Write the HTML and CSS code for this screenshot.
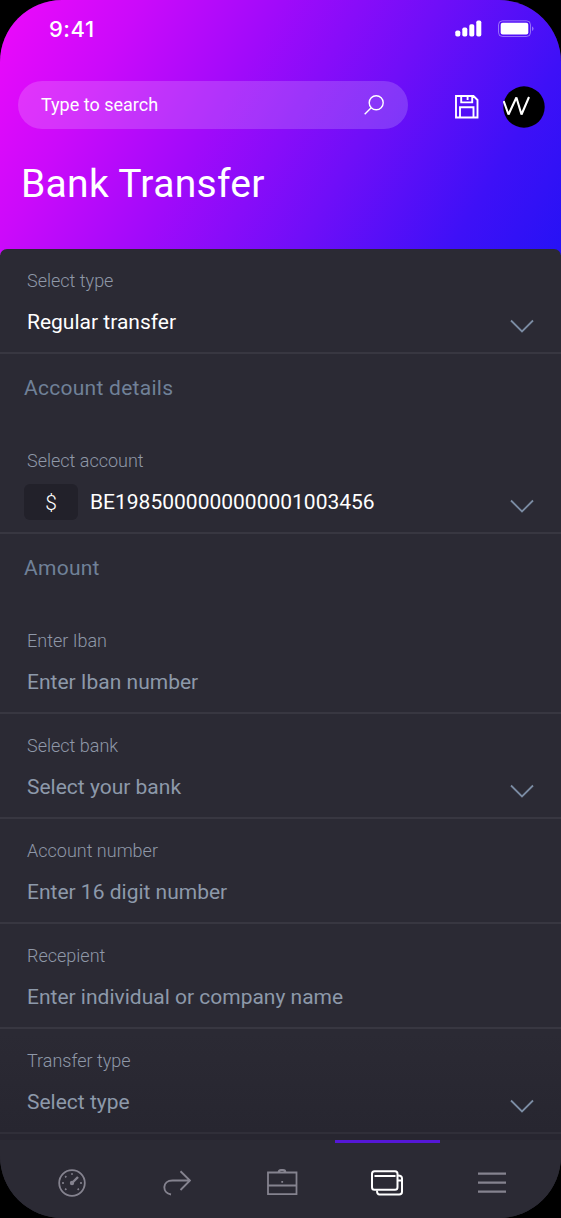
FILE: index.html
```html
<!DOCTYPE html>
<html lang="en">
<head>
<meta charset="utf-8">
<title>Bank Transfer</title>
<link rel="stylesheet" href="styles.css">
</head>
<body>
<main class="phone">
  <header class="header">
    <div class="status">
      <span class="time">9:41</span>
      <svg class="status-icons" width="80" height="18" viewBox="0 0 80 18" fill="#fff">
        <rect x="0.300" y="10.500" width="5" height="6" rx="1.700"/><rect x="7.300" y="7.500" width="5" height="9" rx="1.700"/><rect x="14.300" y="4.200" width="5" height="12.300" rx="1.700"/><rect x="21.300" y="0.500" width="5" height="16" rx="1.700"/>
        <rect x="43.500" y="0.800" width="32" height="15.700" rx="4" fill="none" stroke="#fff" stroke-opacity=".4"/>
        <rect x="45.700" y="2.800" width="27.600" height="11.700" rx="2"/>
        <path d="M77.200 6.300q2.600 2.300 0 4.900z" opacity=".5"/>
      </svg>
    </div>
    <div class="toolbar">
      <div class="search"><span class="placeholder">Type to search</span>
        <svg width="20" height="20" viewBox="0 0 20 20" fill="none" stroke="#fff" stroke-width="1.400"><circle cx="12.200" cy="7.800" r="7"/><path d="M7.200 12.800.7 19.300"/></svg>
      </div>
      <svg class="save" width="24" height="24" viewBox="0 0 24 24" fill="none" stroke="#fff" stroke-width="1.900"><path d="M1 1h17.500l4 4v17.500H1zM6.200 1v6.400h11V1M12.600 2v3M5 22V12.300h13.500V22"/></svg>
      <svg class="avatar" width="42" height="42" viewBox="0 0 42 42"><circle cx="21" cy="21" r="20.700"/><path d="M.7 15 5.500 28.500 13.400 11.500 18.500 28.500 26 11" fill="none" stroke="#fff" stroke-width="2.100" stroke-linejoin="bevel"/></svg>
    </div>
    <h1 class="title">Bank Transfer</h1>
  </header>
  <section class="sheet">
    <div class="field"><label class="label">Select type</label><div class="value filled">Regular transfer</div><svg class="chevron" width="24" height="14" viewBox="0 0 24 14"><path d="M1 1.500 12 12.500 23 1.500"/></svg></div>
    <h2 class="section">Account details</h2>
    <div class="field"><label class="label">Select account</label><div class="value filled account"><span class="currency">$</span><span class="number">BE1985000000000001003456</span></div><svg class="chevron" width="24" height="14" viewBox="0 0 24 14"><path d="M1 1.500 12 12.500 23 1.500"/></svg></div>
    <h2 class="section">Amount</h2>
    <div class="field"><label class="label">Enter Iban</label><div class="value">Enter Iban number</div></div>
    <div class="field"><label class="label">Select bank</label><div class="value">Select your bank</div><svg class="chevron" width="24" height="14" viewBox="0 0 24 14"><path d="M1 1.500 12 12.500 23 1.500"/></svg></div>
    <div class="field"><label class="label">Account number</label><div class="value">Enter 16 digit number</div></div>
    <div class="field"><label class="label">Recepient</label><div class="value">Enter individual or company name</div></div>
    <div class="field last"><label class="label">Transfer type</label><div class="value">Select type</div><svg class="chevron" width="24" height="14" viewBox="0 0 24 14"><path d="M1 1.500 12 12.500 23 1.500"/></svg></div>
  </section>
  <nav class="nav">
    <a class="tab"><svg width="28" height="28" viewBox="0 0 28 28" fill="none" stroke="#85838f" stroke-width="1.800"><circle cx="14" cy="14" r="12.800"/><path d="m14 14 6-6" stroke-width="2.400"/><circle cx="14" cy="14" r="2.200" fill="#85838f" stroke="none"/><path d="M14 4.200v1.600M4.200 14h1.600M22.200 14h1.600M7.200 7.200l1.100 1.100M7.200 20.800l1.100-1.100M20.800 20.800l-1.100-1.100" stroke-width="1.800"/></svg></a>
    <a class="tab"><svg width="28" height="26" viewBox="0 0 28 26" fill="none" stroke="#85838f" stroke-width="1.900"><path d="M26.500 10.500H9.500C-1 10.500-1.200 22.800 8 24.500M17.500 1.200 27 10.500l-9.500 9.500"/></svg></a>
    <a class="tab"><svg width="32" height="28" viewBox="0 0 32 28" fill="none" stroke="#85838f" stroke-width="1.800"><path d="M2 3.500h28.500v21.700H2zM2 16.500h28.500M12.500 3.500q0-2.500 2.500-2.500h2q2.500 0 2.500 2.500M15.300 12.800h1.800"/></svg></a>
    <a class="tab active"><svg width="34" height="26" viewBox="0 0 34 26" fill="none" stroke="#fff" stroke-width="2"><rect x="2" y="1.200" width="25.500" height="18.600" rx="2.500"/><path d="M4.500 6h21M28 5.500q4 0 4 3v13.200q0 2.800-2.800 2.800H9.500q-2.500 0-2.500-4M28 10.500h4"/></svg></a>
    <a class="tab"><svg width="28" height="22" viewBox="0 0 28 22" fill="none" stroke="#85838f" stroke-width="2.200"><path d="M0 1.700h28M0 10.700h28M0 19.700h28"/></svg></a>
  </nav>
</main>
</body>
</html>
```
FILE: styles.css
```css
* { box-sizing: border-box; }
body { margin: 0; background: #000; font-family: Roboto, "Liberation Sans", sans-serif; }
.phone { display: flex; flex-direction: column; width: 561px; height: 1218px; border-radius: 62px; overflow: hidden; background: #2b2a34; }
.header { height: 256px; flex: none; color: #fff; background: linear-gradient(120deg, #ee0afa 0%, #cb0afa 20%, #a00afa 40%, #700ef8 62%, #3e10f7 84%, #2612f5 100%); }
.status { display: flex; justify-content: space-between; height: 81px; padding: 16px 26px 0 49px; }
.time { font: 500 22px/26px Inter, sans-serif; letter-spacing: .5px; }
.status-icons { margin-top: 4px; }
.toolbar { display: flex; align-items: flex-start; height: 48px; padding-left: 18px; }
.search { display: flex; align-items: center; justify-content: space-between; width: 390px; height: 48px; padding: 0 24px 0 23px; border-radius: 24px; background: rgba(255,255,255,.17); font-size: 18px; }
.placeholder { padding-bottom: 2px; }
.save { margin: 14px 0 0 47px; }
.avatar { margin: 5px 0 0 23.500px; }
.title { margin: 31px 0 0 21px; font-size: 39px; line-height: 48px; font-weight: 400; letter-spacing: .3px; }
.sheet { height: 891px; margin-top: -7px; border-radius: 7px 7px 0 0; background: linear-gradient(#2b2a34 88%, #272630 99%); flex: none; }
.field { display: grid; grid-template-columns: 1fr 24px; grid-template-rows: 22px 40px; row-gap: 10px; align-items: center; height: 105px; padding: 21px 27px 0; border-bottom: 2px solid #383741; }
.label { grid-column: 1 / 3; color: #8f98a8; font-size: 18px; line-height: 22px; font-weight: 300; }
.value { color: #8d99aa; font-size: 21px; line-height: 24px; }
.filled { color: #fff; }
.account { display: flex; align-items: center; margin-left: -3px; }
.currency { width: 54px; height: 36px; margin-right: 12px; border-radius: 6px; background: #22212a; font-size: 21px; line-height: 38px; font-weight: 300; text-align: center; }
.chevron { fill: none; stroke: #7b8ca3; stroke-width: 1.800; margin-top: 7px; }
.section { height: 75px; margin: 0; padding: 21px 24px 0; color: #708198; font-size: 21px; line-height: 26px; font-weight: 400; letter-spacing: .27px; }
.last { border-color: #302f39; }
.nav { display: grid; grid-template-columns: repeat(5, 105px); height: 78px; padding-left: 19.500px; background: #2b2a34; flex: none; }
.tab { display: flex; align-items: center; justify-content: center; padding-top: 4px; border-top: 3px solid transparent; }
.active { border-color: #5517d6; }
```
